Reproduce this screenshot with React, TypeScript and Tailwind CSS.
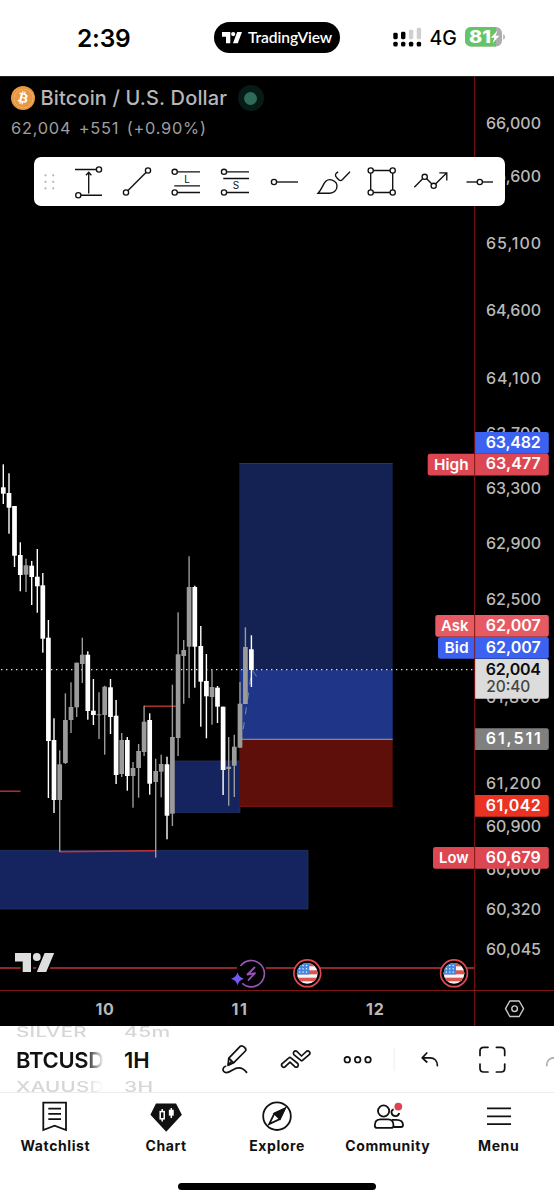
import type { ReactNode } from 'react';
import { FaBitcoin } from 'react-icons/fa';

// x centre, high, body top, body bottom, low, u = grey / d = white
type Candle = [number, number, number, number, number, 'u' | 'd'];

const candles: Candle[] = [
  [3.3, 464.3, 487.3, 493.7, 504, 'd'],
  [9, 473.3, 493, 507.7, 533.7, 'd'],
  [14.5, 506, 506, 555.7, 567, 'd'],
  [20.3, 542.3, 555, 575, 591.3, 'd'],
  [26, 558.7, 565.3, 574.7, 592, 'u'],
  [31.7, 561, 565.7, 577, 605, 'd'],
  [37.3, 549, 576.7, 586.3, 612.7, 'd'],
  [42.8, 573, 585.3, 638.7, 652.7, 'd'],
  [48.4, 620, 637.7, 741, 798, 'd'],
  [54, 718.3, 740, 800, 813, 'd'],
  [59.7, 750.3, 764.3, 800, 852, 'u'],
  [65.4, 693.3, 720, 763, 764, 'u'],
  [71, 682.3, 707, 720, 733, 'u'],
  [76.7, 662.7, 662.7, 707.3, 717, 'u'],
  [82.3, 637.7, 654.7, 664, 683, 'u'],
  [87.8, 651.3, 654.7, 711, 719.7, 'd'],
  [93.4, 679, 710.7, 715, 725, 'd'],
  [99, 692.3, 714.3, 715.3, 739, 'u'],
  [104.7, 685.7, 686.7, 715, 754.7, 'u'],
  [110.5, 679, 687.3, 717, 734, 'd'],
  [116.1, 700, 715.7, 775, 784, 'd'],
  [121.7, 733, 740, 774, 777, 'u'],
  [127.3, 737, 740, 776, 790.7, 'd'],
  [133, 762, 768, 776, 807.7, 'u'],
  [138.6, 744, 751, 768, 797.7, 'u'],
  [144.1, 705.7, 721.7, 752, 756, 'u'],
  [149.7, 713.3, 720, 783.7, 794.7, 'd'],
  [155.7, 758.7, 771, 782, 857.7, 'u'],
  [161.2, 754.7, 764, 771.7, 797.3, 'u'],
  [167, 756.7, 764.3, 815.7, 839.3, 'd'],
  [172.4, 684.7, 737, 813.7, 826, 'u'],
  [178.1, 612.3, 654.3, 738, 756, 'u'],
  [183.7, 640, 650, 656, 703.7, 'u'],
  [189.1, 556.3, 587, 646.7, 698, 'u'],
  [194.8, 585.7, 587, 646.7, 687.7, 'd'],
  [200.8, 626, 646, 681.7, 726.7, 'd'],
  [206.4, 654, 681, 696.3, 738.3, 'd'],
  [212, 669.7, 687, 697, 724.7, 'u'],
  [217.5, 686, 687.7, 706.7, 723, 'd'],
  [223.1, 706.7, 706.7, 770, 795, 'd'],
  [228.7, 737, 766.7, 769, 805.7, 'u'],
  [234.3, 734.7, 746.7, 765.7, 797, 'u'],
  [240, 682, 703.7, 747.7, 747.7, 'u'],
  [245.4, 627.3, 647, 704, 704, 'u'],
  [251.4, 635.3, 649.3, 670, 687, 'd'],
];

const ticks: [string, number][] = [
  ['66,000', 123],
  ['65,600', 176],
  ['65,100', 243],
  ['64,600', 310.5],
  ['64,100', 378],
  ['63,700', 433],
  ['63,300', 488],
  ['62,900', 543.5],
  ['62,500', 599],
  ['61,800', 697.5],
  ['61,200', 783],
  ['60,900', 826],
  ['60,600', 869],
  ['60,320', 909],
  ['60,045', 949],
];

interface Tag {
  price: string;
  y: number;
  fill: string;
  label?: string;
  labelX?: number;
}

const tags: Tag[] = [
  { price: '63,482', y: 432, fill: '#3b62f0' },
  { price: '63,477', y: 453.7, fill: '#dd4751', label: 'High', labelX: 427.7 },
  { price: '62,007', y: 615, fill: '#e65b63', label: 'Ask', labelX: 435.3 },
  { price: '62,007', y: 637, fill: '#3b62f0', label: 'Bid', labelX: 438 },
  { price: '61,511', y: 728.2, fill: '#808080' },
  { price: '61,042', y: 795, fill: '#eb3323' },
  { price: '60,679', y: 847, fill: '#dd4751', label: 'Low', labelX: 433 },
];

const labelWidths: Record<string, number> = { High: 34.5, Ask: 27.5, Bid: 24, Low: 29.5 };

function Flag({ x, id }: { x: number; id: string }) {
  return (
    <g transform={`translate(${x} 973.3)`}>
      <clipPath id={id}>
        <circle r="10.4" />
      </clipPath>
      <circle r="13.4" fill="#000" stroke="#dd4b53" strokeWidth="1.7" />
      <g clipPath={`url(#${id})`}>
        <rect x="-11" y="-11" width="22" height="22" fill="#f6f6f6" />
        <rect x="-11" y="-11" width="22" height="4" fill="#dc5452" />
        <rect x="-11" y="-3" width="22" height="4" fill="#dc5452" />
        <rect x="-11" y="4.4" width="22" height="3.6" fill="#dc5452" />
        <rect x="-11" y="-11" width="13" height="12.2" fill="#4288e0" />
        {[-7.6, -4.2, -0.8].map((sx) =>
          [-7.8, -4.5, -1.2].map((sy) => <rect key={`${sx},${sy}`} x={sx - 0.6} y={sy - 0.6} width="1.2" height="1.2" fill="#fff" />)
        )}
      </g>
    </g>
  );
}

function ChartCanvas() {
  return (
    <svg className="block h-[950px] w-[554px]" viewBox="0 76 554 950" fontFamily="Inter, 'Liberation Sans', sans-serif">
      {/* demand zones */}
      <rect x="-2" y="850.3" width="310" height="58.7" fill="#15245f" stroke="#24345f" strokeWidth="0.8" />
      <rect x="174" y="761" width="66" height="51.4" fill="#15245f" stroke="#24345f" strokeWidth="0.8" />

      {/* long position */}
      <rect x="239.3" y="463.3" width="153.4" height="206.5" fill="#132253" />
      <path d="M239.3 463.6H392.7" stroke="#213a80" />
      <rect x="239.3" y="669.8" width="153.4" height="69.7" fill="#1f3688" />
      <rect x="239.3" y="739.5" width="153.4" height="67.3" fill="#5f0f09" />
      <path d="M239.3 739.3H392.7" stroke="#85868f" strokeWidth="1.2" />
      <path d="M239.3 806.3H392.7" stroke="#7a1510" />
      <path d="M241 744L251 676L256.5 677" fill="none" stroke="#7d838f" strokeWidth="1.1" strokeDasharray="7 8" />
      <path d="M251 668L256.5 676.5" stroke="#7d838f" />

      {/* structure lines */}
      <g stroke="#c13334" strokeWidth="1.4">
        <path d="M0 791.2H20.5" />
        <path d="M59.5 851.8L155.5 850.8" />
        <path d="M144 706.2H176" />
        <path d="M0 968H474.5" />
      </g>

      <path d="M1 669.6H474" stroke="#e0e0e0" strokeWidth="1.3" strokeDasharray="1.4 3.6" />

      {candles.map(([x, high, top, bottom, low, dir]) => {
        const fill = dir === 'u' ? '#9b9b9b' : '#fff';
        return (
          <g key={x} fill={fill}>
            <rect x={x - 0.7} y={high} width="1.4" height={low - high} />
            <rect x={x - 2.35} y={top} width="4.7" height={bottom - top} />
          </g>
        );
      })}

      {/* watermark logo */}
      <g fill="#dedede" stroke="#000" strokeWidth="4" paintOrder="stroke">
        <path d="M15 953H31V972H22.7V961.5H15Z" />
        <path d="M44.6 953H54.2L46.2 972H36.8Z" />
        <circle cx="36.8" cy="957" r="3.9" strokeWidth="1.5" />
      </g>

      {/* event markers */}
      <circle cx="251.3" cy="973.7" r="15.5" fill="#000" />
      <circle cx="237.5" cy="978.7" r="8" fill="#000" />
      <path d="M240.5 966A13.2 13.2 0 1 1 242.3 983.4" fill="none" stroke="#9954b6" strokeWidth="1.6" />
      <path d="M254.5 967.5L247.5 974.5L255 973.2L248.5 980" fill="none" stroke="#9954b6" strokeWidth="1.8" strokeLinejoin="round" strokeLinecap="round" />
      <path d="M237.5 972.2Q238.9 977.3 244 978.7Q238.9 980.1 237.5 985.2Q236.1 980.1 231 978.7Q236.1 977.3 237.5 972.2Z" fill="#7257f5" />
      <Flag x={307.3} id="flag-a" />
      <Flag x={454} id="flag-b" />

      {/* price scale */}
      <g fill="#b9b9b9" fontSize="16" fontWeight="500">
        {ticks.map(([text, y]) => (
          <text key={text} x="486" y={y + 5.8} textLength="55" lengthAdjust="spacing">
            {text}
          </text>
        ))}
      </g>
      {tags.map((tag) => (
        <g key={tag.y} fontSize="16" fontWeight="600">
          <path d={`M475 ${tag.y}h71.5a2.3 2.3 0 0 1 2.3 2.3v17.2a2.3 2.3 0 0 1-2.3 2.3H475Z`} fill={tag.fill} />
          <text x="485.8" y={tag.y + 15.7} fill="#fff" textLength="55" lengthAdjust="spacing">
            {tag.price}
          </text>
          {tag.label && tag.labelX && (
            <>
              <path d={`M474.5 ${tag.y}H${tag.labelX + 2.3}a2.3 2.3 0 0 0-2.3 2.3v17.2a2.3 2.3 0 0 0 2.3 2.3H474.5Z`} fill={tag.fill} />
              <text x={468.6 - labelWidths[tag.label]} y={tag.y + 16.2} fill="#fff" fontSize="15.2" textLength={labelWidths[tag.label]} lengthAdjust="spacingAndGlyphs">
                {tag.label}
              </text>
            </>
          )}
        </g>
      ))}
      <path d="M475 659h71.5a2.3 2.3 0 0 1 2.3 2.3v35.2a2.3 2.3 0 0 1-2.3 2.3H475Z" fill="#dcdcdc" />
      <text x="485.8" y="674.9" fontSize="16" fontWeight="600" fill="#0b0b0b" textLength="55" lengthAdjust="spacing">
        62,004
      </text>
      <text x="486.3" y="692.4" fontSize="15.5" fontWeight="500" fill="#444" textLength="44" lengthAdjust="spacing">
        20:40
      </text>

      {/* axes */}
      <path d="M474.7 76V1026M0 990.5H554" stroke="#a01a1a" strokeOpacity="0.8" strokeWidth="1.1" />
      <path d="M0 76.3H554" stroke="#303734" strokeWidth="0.8" />

      {/* time scale */}
      <g fill="#b9b9b9" fontSize="16" fontWeight="700" textAnchor="middle">
        <text x="105" y="1014.8" letterSpacing="0.7">10</text>
        <text x="240" y="1014.8" letterSpacing="1.6">11</text>
        <text x="375.4" y="1014.8" letterSpacing="1">12</text>
      </g>
      <g fill="none" stroke="#c9c9c9" strokeWidth="1.4" strokeLinejoin="round">
        <path d="M505.5 1008.7L509.8 1001H519.2L523.6 1008.7L519.2 1016.5H509.8Z" />
        <circle cx="514.6" cy="1008.7" r="2.8" />
      </g>
    </svg>
  );
}

function StatusBar() {
  return (
    <header className="grid h-[76px] grid-cols-[214px_126px_214px] bg-white">
      <div className="pt-[20px] pl-[77px] text-[24.5px] leading-[36px] font-semibold tracking-[-0.2px]">2:39</div>
      <div className="mt-[22px] flex h-[31px] items-center rounded-full bg-black pl-[8px] text-white">
        <svg className="h-[12px] w-[20px]" viewBox="0 0 20 12" fill="currentColor">
          <path d="M0 0H8.3V11.2H4V4.8H0Z" />
          <circle cx="11.2" cy="2.1" r="2.1" />
          <path d="M15.2 0H20L15.8 11.2H11Z" />
        </svg>
        <span className="ml-[6px] font-['Lato'] text-[15.6px] leading-none font-semibold tracking-[-0.1px]">TradingView</span>
      </div>
      <div className="flex pt-[26px] pl-[53px]">
        <svg className="mt-px h-[22px] w-[29px]" viewBox="0 0 29 22">
          <g fill="#000">
            <rect x="0.3" y="5.8" width="4.4" height="6.4" rx="1.4" />
            <rect x="8" y="4.8" width="4.4" height="7.4" rx="1.4" />
            <rect x="0.3" y="14.7" width="4.4" height="4.8" rx="1.5" />
            <rect x="8" y="14.7" width="4.4" height="4.8" rx="1.5" />
            <rect x="15.9" y="14.7" width="4.4" height="4.8" rx="1.5" />
            <rect x="23.7" y="14.7" width="4.4" height="4.8" rx="1.5" />
          </g>
          <g fill="#cfcfcf">
            <rect x="15.9" y="2.7" width="4.4" height="9.5" rx="1.4" />
            <rect x="23.7" y="0.7" width="4.4" height="11.5" rx="1.4" />
          </g>
        </svg>
        <span className="ml-[7.5px] w-[28px] text-[19.5px] leading-[24px] font-medium tracking-[-0.1px]">4G</span>
        <svg className="ml-[7px] h-[22px] w-[41px]" viewBox="0 0 41 22">
          <clipPath id="cell">
            <rect x="0" y="1" width="37" height="19.5" rx="6" />
          </clipPath>
          <g clipPath="url(#cell)">
            <rect width="41" height="22" fill="#adadad" />
            <rect width="31" height="22" fill="#65c466" />
          </g>
          <path d="M38.2 8v5.8q1.8-.6 1.8-2.9T38.2 8Z" fill="#b3b3b3" />
          <text x="4" y="16.8" fontFamily="Inter" fontSize="17" fontWeight="800" fill="#fff" textLength="22" lengthAdjust="spacingAndGlyphs">
            81
          </text>
          <path d="M32.5 4.5L25.8 11.8H29.5L27.6 17.2L34.4 9.8H30.6Z" fill="#fff" />
        </svg>
      </div>
    </header>
  );
}

function Tool({ children }: { children: ReactNode }) {
  return (
    <button className="flex h-full w-[49px] items-center justify-center">
      <svg className="h-[40px] w-[40px] shrink-0" viewBox="0 0 40 40" fill="none" stroke="#111" strokeWidth="1.35">
        {children}
      </svg>
    </button>
  );
}

function Node({ x, y }: { x: number; y: number }) {
  return <circle cx={x} cy={y} r="2.6" fill="#fff" />;
}

function DrawingToolbar() {
  return (
    <div className="absolute top-[81px] left-[33.5px] flex h-[49px] w-[471px] items-center rounded-[7px] bg-white">
      <svg className="h-[18px] w-[30.5px] shrink-0" viewBox="0 0 30.5 18" fill="#b4b4b4">
        {[11.5, 19.2].map((x) => [2.3, 8.8, 15.3].map((y) => <circle key={`${x}-${y}`} cx={x} cy={y} r="1.1" />))}
      </svg>
      <Tool>
        <path d="M7 7.5H30M10 33.2H34M20.7 31.5V10.5M18 13.2L20.7 10.3L23.4 13.2" />
        <Node x={31} y={7.5} />
        <Node x={10.3} y={33.2} />
      </Tool>
      <Tool>
        <path d="M9 30.5L31 8.5" />
        <Node x={9} y={30.5} />
        <Node x={31} y={8.5} />
      </Tool>
      <Tool>
        <path d="M8.7 9.8H34M8.3 23.8H34M8.7 30.5H34" />
        <Node x={8.7} y={9.8} />
        <Node x={8.7} y={30.5} />
        <text x="21" y="20.6" fontSize="10" fontFamily="Inter" textAnchor="middle" fill="#111" stroke="none">L</text>
      </Tool>
      <Tool>
        <path d="M9 9.8H34M8.3 16.5H34M9 30.5H34" />
        <Node x={9} y={9.8} />
        <Node x={9} y={30.5} />
        <text x="21" y="27" fontSize="10" fontFamily="Inter" textAnchor="middle" fill="#111" stroke="none">S</text>
      </Tool>
      <Tool>
        <path d="M10 20H34" />
        <Node x={10} y={20} />
      </Tool>
      <Tool>
        <path d="M5 31.2C9.5 26.5 9.5 22.5 12.8 19.3C16.5 15.8 24 18.5 24 24.3C24 28.6 20.6 31.2 16.8 31.2Z" />
        <path d="M25.2 10C22.3 11 21.6 13.6 23.6 15.4C25 16.6 25.5 18.6 27.6 18.6C28.4 18.6 29 18 29.5 17.5L37 9.8" />
      </Tool>
      <Tool>
        <path d="M8.7 8.5H30.7V30.5H8.7Z" />
        <Node x={8.7} y={8.5} />
        <Node x={30.7} y={8.5} />
        <Node x={8.7} y={30.5} />
        <Node x={30.7} y={30.5} />
      </Tool>
      <Tool>
        <path d="M3.3 25.2L13.7 14.8L22.7 23.8L35.6 11M28.3 10.8H35.8V18.5" />
        <Node x={13.7} y={14.8} />
        <Node x={22.7} y={23.8} />
      </Tool>
      <Tool>
        <path d="M6.5 20H33" />
        <Node x={19.8} y={20} />
      </Tool>
    </div>
  );
}

function SymbolHeader() {
  return (
    <div className="absolute top-[9px] left-[11px] text-[#b7b7b7]">
      <div className="flex h-[26px] items-center">
        <span className="flex h-[24px] w-[24px] items-center justify-center rounded-full bg-[#e99840]">
          <span className="flex h-[19px] w-[19px] items-center justify-center overflow-hidden rounded-full bg-white">
            <FaBitcoin className="h-[22px] w-[22px] shrink-0 text-[#e99840]" />
          </span>
        </span>
        <span className="ml-[5.5px] w-[197px] text-[20px] leading-[26px] font-medium tracking-[0.15px]">Bitcoin / U.S. Dollar</span>
        <span className="flex h-[26px] w-[26px] items-center justify-center rounded-full bg-[#071b16]">
          <span className="h-[13px] w-[13px] rounded-full bg-[#2f6b5b]" />
        </span>
      </div>
      <div className="mt-[6.5px] flex gap-[7.5px] text-[16.4px] leading-[20px] tracking-[0.75px] text-[#9e9e9e]">
        <span>62,004</span>
        <span>+551</span>
        <span>(+0.90%)</span>
      </div>
    </div>
  );
}

function SymbolBar() {
  return (
    <section className="grid h-[67px] grid-cols-[109px_97px_348px] items-start overflow-hidden border-b border-[#ececec] bg-white">
      <div className="mt-[-8px] w-[104px] overflow-hidden mask-r-from-82% mask-r-to-100% pl-[16px]">
        <div className="h-[28px] origin-left scale-y-[.68] text-[20.5px] leading-[28px] font-medium tracking-[0.3px] text-[#d6d6d6]">SILVER</div>
        <div className="h-[28px] text-[22px] leading-[28px] font-semibold tracking-[-0.3px] text-[#111]">BTCUSD</div>
        <div className="h-[28px] origin-left scale-y-[.68] text-[20.5px] leading-[26px] font-medium tracking-[0.3px] text-[#d6d6d6]">XAUUSD</div>
      </div>
      <div className="mt-[-8px] pl-[15px]">
        <div className="h-[28px] scale-y-[.68] text-[21px] leading-[28px] font-medium tracking-[0.4px] text-[#d6d6d6]">45m</div>
        <div className="h-[28px] text-[22px] leading-[28px] font-semibold text-[#111]">1H</div>
        <div className="h-[28px] scale-y-[.68] text-[21px] leading-[26px] font-medium tracking-[0.4px] text-[#d6d6d6]">3H</div>
      </div>
      <svg className="h-[66px] w-[348px]" viewBox="206 1026 348 66" fill="none" stroke="#111" strokeWidth="1.7" strokeLinejoin="round" strokeLinecap="round">
        {/* pencil */}
        <path d="M228 1065.4L228.8 1058.2L240.2 1046.4C242.3 1044.4 247.2 1048.6 245.4 1051L233.6 1062.8L228 1065.4L231 1062M228.8 1058.2L233.6 1062.8" />
        <path d="M225.6 1066.3C223.2 1067 222.3 1069.7 223.6 1071.3C225.4 1073.6 229.6 1072 232.6 1070C237.8 1066.8 242.7 1067.5 246.6 1072.4" />
        {/* indicators */}
        <path d="M290.2 1057.4Q289.8 1057 289.2 1057.6L281.9 1063.8Q280.9 1065.5 282.5 1066.8Q283.7 1067.8 285.2 1066.7L290 1062.2L294.8 1066.7Q296.3 1067.8 297.7 1066.6Q299 1065 297.8 1063.5Z" />
        <path d="M301.2 1060.6Q301.6 1061 302.2 1060.6L309.5 1054.4Q310.6 1052.8 309 1051.4Q307.8 1050.4 306.3 1051.5L301.5 1056L297 1051.5Q295.4 1050.3 294 1051.6Q292.8 1053.2 293.8 1054.6Z" />
        {/* more */}
        <circle cx="347.3" cy="1059.7" r="2.8" />
        <circle cx="357.7" cy="1059.7" r="2.8" />
        <circle cx="368" cy="1059.7" r="2.8" />
        <path d="M394.2 1048.5V1070.5" stroke="#ededed" strokeWidth="1" />
        {/* undo */}
        <path d="M426.8 1053L422.2 1057.8L426.8 1062M422.4 1057.8H430C434.5 1057.8 437.4 1061 437.4 1065.6" />
        {/* fullscreen */}
        <path d="M480 1055.5V1051Q480 1047.3 483.7 1047.3H488M496.4 1047.3H501Q504.7 1047.3 504.7 1051V1055.5M504.7 1064V1068.3Q504.7 1072 501 1072H496.4M488 1072H483.7Q480 1072 480 1068.3V1064" />
        {/* redo, cut off by the screen edge */}
        <path d="M546.7 1065.6C546.7 1061 549.5 1057.8 554 1057.8H558" stroke="#aaa" />
      </svg>
    </section>
  );
}

const tabs: { name: string; icon: ReactNode }[] = [
  {
    name: 'Watchlist',
    icon: <path d="M8.3 3.6H31V31L19.6 26.6L8.3 31ZM13.3 9.7H26M13.3 14.9H26M13.3 20.1H26" />,
  },
  {
    name: 'Chart',
    icon: (
      <>
        <path d="M10.5 5.4H29.5L34.8 15.7L20.2 31.5L5.5 15.7Z" fill="#111" />
        <g stroke="#fff" strokeWidth="1.5">
          <path d="M16.2 10V12.5M16.2 20V22.5M25.3 9V19" />
          <rect x="14.2" y="12.6" width="4" height="7.2" />
          <rect x="23.6" y="11.5" width="3.4" height="4.4" fill="#fff" />
        </g>
      </>
    ),
  },
  {
    name: 'Explore',
    icon: (
      <>
        <circle cx="20" cy="17.2" r="13.8" />
        <path d="M27.8 9.6L22.8 20L12.2 25L17.3 14.6Z" />
        <path d="M27.8 9.6L22.8 20L17.3 14.6Z" fill="#111" />
      </>
    ),
  },
  {
    name: 'Community',
    icon: (
      <>
        <circle cx="15.6" cy="12" r="5.6" />
        <path d="M11.3 20.3H20Q25.5 20.3 25.5 26.4Q25.5 28.9 23 28.9H9.2Q6.8 28.9 6.8 26.4Q6.8 20.3 12.6 20.3" />
        <path d="M23.8 20.8H28.5Q35 20.8 35 26Q35 28 33 28H25.3" />
        <path d="M25.6 10.2Q23.1 11.3 23.5 13.8Q24.2 17.1 27.6 17.2Q30.6 17 31.2 14" />
        <circle cx="30.3" cy="7.6" r="3.9" fill="#e0434f" stroke="none" />
      </>
    ),
  },
  { name: 'Menu', icon: <path d="M8 9.3H32M8 17.3H32M8 25.2H32" /> },
];

function TabBar() {
  return (
    <footer className="flex h-[107px] flex-col items-center bg-white">
      <nav className="grid w-full grid-cols-5 pt-[6px]">
        {tabs.map((tab) => (
          <button key={tab.name} className="flex flex-col items-center">
            <svg className="h-[36px] w-[40px]" viewBox="0 0 40 36" fill="none" stroke="#111" strokeWidth="1.8">
              {tab.icon}
            </svg>
            <span className="mt-px text-[14px] leading-[20px] font-bold tracking-[0.6px] text-[#111]">{tab.name}</span>
          </button>
        ))}
      </nav>
      <div className="mt-[27px] h-[6.5px] w-[198px] rounded-full bg-black" />
    </footer>
  );
}

export default function App() {
  return (
    <div className="h-[1200px] w-[554px] overflow-hidden bg-white font-['Inter','Liberation_Sans',sans-serif] text-black">
      <StatusBar />
      <main className="relative h-[950px] overflow-hidden bg-black">
        <ChartCanvas />
        <SymbolHeader />
        <DrawingToolbar />
      </main>
      <SymbolBar />
      <TabBar />
    </div>
  );
}
